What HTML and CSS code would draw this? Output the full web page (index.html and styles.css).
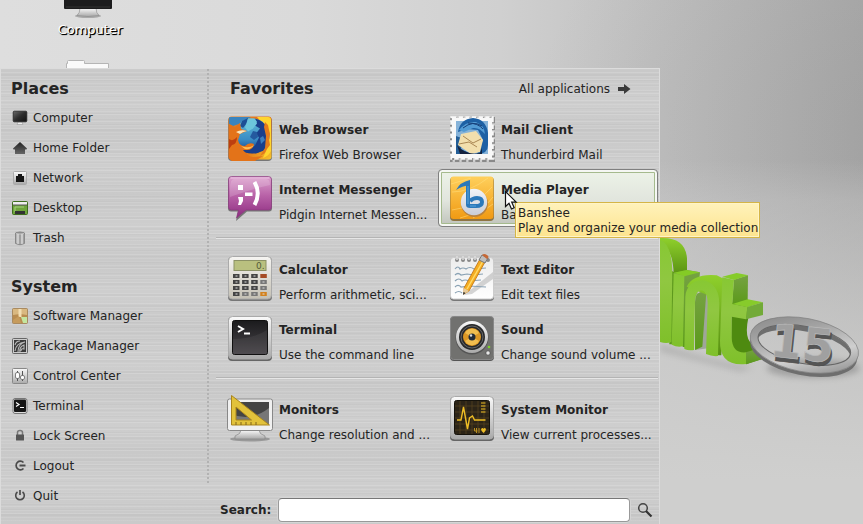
FILE: index.html
```html
<!DOCTYPE html>
<html lang="en">
<head>
<meta charset="utf-8">
<title>Desktop menu</title>
<link rel="stylesheet" href="styles.css">
</head>
<body>
<svg class="defs" aria-hidden="true">
  <defs>
    <linearGradient id="silver" x1="0" y1="0" x2="0" y2="1"><stop offset="0" stop-color="#fafafa"/><stop offset="1" stop-color="#a9a9a9"/></linearGradient>
    <linearGradient id="paper" x1="0" y1="0" x2="0" y2="1"><stop offset="0" stop-color="#ececec"/><stop offset="1" stop-color="#fff"/></linearGradient>
    <linearGradient id="pearl" x1="0" y1="0" x2="0" y2="1"><stop offset="0" stop-color="#f2f4f8"/><stop offset="1" stop-color="#c9cdd6"/></linearGradient>
    <linearGradient id="dark" x1="0" y1="0" x2="0" y2="1"><stop offset="0" stop-color="#1b1b1d"/><stop offset="1" stop-color="#49454a"/></linearGradient>
    <linearGradient id="screen" x1="0" y1="0" x2="1" y2="1"><stop offset="0" stop-color="#6a6a6a"/><stop offset=".5" stop-color="#2c2c2c"/><stop offset="1" stop-color="#111"/></linearGradient>
    <linearGradient id="coal" x1="0" y1="0" x2="0" y2="1"><stop offset="0" stop-color="#222"/><stop offset="1" stop-color="#666"/></linearGradient>
    <linearGradient id="pink" x1="0" y1="0" x2="0" y2="1"><stop offset="0" stop-color="#dca0cd"/><stop offset=".45" stop-color="#b963a8"/><stop offset="1" stop-color="#8d2b80"/></linearGradient>
    <linearGradient id="amber" x1="0" y1="0" x2="0" y2="1"><stop offset="0" stop-color="#ffd05c"/><stop offset="1" stop-color="#f09a13"/></linearGradient>
    <linearGradient id="beige" x1="0" y1="0" x2="0" y2="1"><stop offset="0" stop-color="#f6f5f2"/><stop offset="1" stop-color="#c4c0b4"/></linearGradient>
    <linearGradient id="globe" x1="0" y1="0" x2="0" y2="1"><stop offset="0" stop-color="#62bcd8"/><stop offset=".6" stop-color="#3a8cc4"/><stop offset="1" stop-color="#123a86"/></linearGradient>
    <linearGradient id="flame" x1="0" y1="0" x2="1" y2="1"><stop offset="0" stop-color="#e98527"/><stop offset=".6" stop-color="#e06c17"/><stop offset="1" stop-color="#f7c62c"/></linearGradient>
    <linearGradient id="mintTop" x1="0" y1="0" x2="0" y2="1"><stop offset="0" stop-color="#8fd02c"/><stop offset="1" stop-color="#578f12"/></linearGradient>
    <linearGradient id="mintFace" x1="0" y1="0" x2="0" y2="1"><stop offset="0" stop-color="#87c833"/><stop offset=".4" stop-color="#90c741"/><stop offset="1" stop-color="#7fc02a"/></linearGradient>
    <linearGradient id="mintSide" x1="0" y1="0" x2="0" y2="1"><stop offset="0" stop-color="#76a243"/><stop offset="1" stop-color="#5b9a1a"/></linearGradient>
    <linearGradient id="ring" x1="0" y1="0" x2="1" y2="1"><stop offset="0" stop-color="#888"/><stop offset=".3" stop-color="#a2a2a2"/><stop offset=".65" stop-color="#cfcfcf"/><stop offset="1" stop-color="#888"/></linearGradient>
    <filter id="soft" x="-20%" y="-60%" width="140%" height="220%"><feGaussianBlur stdDeviation="9"/></filter>
  </defs>
</svg>

<header class="desktop-icons">
  <a class="shortcut" href="#computer">
    <svg width="52" height="18" viewBox="0 0 52 18" aria-hidden="true">
      <ellipse cx="26" cy="16" rx="13" ry="2" fill="#aaa"/>
      <path d="M18 8h16q0 5 3 7.500-11 2-22 0 3-2.500 3-7.500z" fill="url(#silver)" stroke="#888" stroke-width=".6"/>
      <path d="M2 0h48v8q0 1-1 1H3q-1 0-1-1z" fill="#1c1c1d"/><path d="M4 7h44" stroke="#333"/>
    </svg>
    <span>Computer</span>
  </a>
  <svg class="folder" width="46" height="8" viewBox="0 0 46 8" aria-hidden="true"><path d="M1.500 9V3.500h1v-2q0-1 1-1h15q1 0 1 1v2h24V9z" fill="#fafafa" stroke="#b5b5b5"/></svg>
</header>

<main class="workspace">
  <section class="menu">
    <nav class="sidebar">
      <h2>Places</h2>
      <button class="item"><svg viewBox="0 0 16 16"><path d="M6 12h4l1 2.500H5z" fill="#eee" stroke="#999" stroke-width=".6"/><rect x="1.200" y="1.200" width="13.600" height="10.600" rx="1" fill="url(#screen)" stroke="#222" stroke-width=".8"/></svg>Computer</button>
      <button class="item"><svg viewBox="0 0 16 16"><path d="M8 2l7 6.500-.5 1H13v4.500H3V9.500H1.500l-.5-1z" fill="url(#coal)"/></svg>Home Folder</button>
      <button class="item"><svg viewBox="0 0 16 16"><rect x="1.500" y="1.500" width="13" height="13" rx="1" fill="url(#silver)" stroke="#aaa"/><path d="M4 12V6h2V4h4v2h2v6z" fill="#151515"/></svg>Network</button>
      <button class="item"><svg viewBox="0 0 16 16"><rect x=".5" y="1.500" width="15" height="13" rx="1" fill="#6fa63c" stroke="#3f6d1e"/><path d="M1 2h14v3H1z" fill="#eee"/><path d="M1 5h14" stroke="#555"/><path d="M3 12V7h9" stroke="#a7cf7c" fill="none"/><path d="M3 11h10v3H3z" fill="#333"/></svg>Desktop</button>
      <button class="item"><svg viewBox="0 0 16 16"><path d="M3.500 2.500h9v11q-4.500 2.500-9 0z" fill="#b5b5b5" stroke="#888"/><path d="M6 4v10M10 4v10" stroke="#e4e4e4"/><path d="M8 4v10M12 4v9" stroke="#8d8d8d"/><ellipse cx="8" cy="2.500" rx="4.500" ry="1.500" fill="#8c8c8c" stroke="#ddd" stroke-width=".7"/></svg>Trash</button>

      <h2>System</h2>
      <button class="item"><svg viewBox="0 0 16 16"><rect x=".5" y=".5" width="15" height="15" rx="1" fill="#b98c50" stroke="#a98a60"/><path d="M1 1h14v6l-7-1-7 1z" fill="#d9b880"/><path d="M6.500 1h3v8h-3z" fill="#f2dfb4"/><path d="M9 9h6v6h-4z" fill="#c4e6a0"/><path d="M1 12l6-4 2 7H1z" fill="#c69b5c"/></svg>Software Manager</button>
      <button class="item"><svg viewBox="0 0 16 16"><rect x=".5" y=".5" width="15" height="15" rx="1" fill="#ccc" stroke="#666"/><path d="M2 2h12v12H2z" fill="#3a3a3a"/><path d="M3 13q1-8 10-9-7 2-7 10m2 0q-1-5 4-7v4q-3-1-3 2M3 7q1-4 5-4" fill="none" stroke="#bbb" stroke-width="1.100"/></svg>Package Manager</button>
      <button class="item"><svg viewBox="0 0 16 16"><rect x=".5" y=".5" width="15" height="15" rx="1" fill="url(#silver)" stroke="#888"/><path d="M5.500 3v10M10.500 3v10" stroke="#555"/><rect x="3.500" y="4.500" width="4" height="6" rx="1.500" fill="#fff" stroke="#666" stroke-width=".8"/><rect x="8.500" y="7.500" width="4" height="4" rx="1.500" fill="#fff" stroke="#666" stroke-width=".8"/></svg>Control Center</button>
      <button class="item"><svg viewBox="0 0 16 16"><rect x="1" y=".5" width="14" height="15" rx="2" fill="#ddd" stroke="#777"/><rect x="2" y="1.500" width="12" height="12.500" rx="1" fill="#151515"/><path d="M4 4.500l3 2-3 2M8 9.500h4" fill="none" stroke="#fff" stroke-width="1.200"/></svg>Terminal</button>
      <button class="item"><svg viewBox="0 0 16 16"><path d="M5.500 7V4.500q0-2 2.500-2t2.500 2V7" fill="none" stroke="#777" stroke-width="1.500"/><rect x="4" y="6.500" width="8" height="6" rx=".5" fill="#555"/></svg>Lock Screen</button>
      <button class="item"><svg viewBox="0 0 16 16"><path d="M11.500 4.500A4.300 4.300 0 1 0 11.500 10.500" fill="none" stroke="#4b4b4b" stroke-width="1.700"/><path d="M7.500 7.500h6" stroke="#4b4b4b" stroke-width="2"/></svg>Logout</button>
      <button class="item"><svg viewBox="0 0 16 16"><path d="M5.500 4a4.300 4.300 0 1 0 5 0" fill="none" stroke="#4b4b4b" stroke-width="1.600"/><path d="M8 2v5" stroke="#4b4b4b" stroke-width="1.700"/></svg>Quit</button>
    </nav>

    <div class="content">
      <section class="favorites">
        <div class="heading">
          <h2>Favorites</h2>
          <button class="all">All applications <svg width="14" height="12" viewBox="0 0 14 12" aria-hidden="true"><path d="M1 4h6V1l6.500 5L7 11V8H1z" fill="#3b3b3b"/></svg></button>
        </div>

        <div class="group">
          <button class="app">
            <svg viewBox="0 0 48 48"><rect x="2" y="3" width="44" height="44" rx="4" fill="#777"/><rect x="2.500" y="2.500" width="43" height="43" rx="3" fill="url(#flame)"/>
              <path d="M31 3h11q3 0 3 3v31q-2 5-8 7 4-8 3-17 0-16-9-24z" fill="#ffd52e"/><path d="M3 4q0-1 2-1h20l-12 7-6 2-4-2z" fill="#3b84bd"/>
              <circle cx="26" cy="22" r="17.500" fill="url(#globe)"/>
              <path d="M28 4.500q7 1 11 6l4 9v9l-5 8-8 3-10-1-4-3q9 1 13-4l4-8-3-4 4-5-5-3 2-4z" fill="#1a3f8b"/>
              <path d="M16 7l6-3-1 5-4 5-3-2z" fill="#1d4f95"/><path d="M22 4.500h7l2 5-4 5-5 3-3-4z" fill="#6cc6dc"/><path d="M27 17l4 1 1 5-4 3-4-3z" fill="#24599f"/><path d="M34 24l3-2 2 4-4 4z" fill="#3d7fc0"/>
              <path d="M3 10l6 3 5-4 1 6 6 2-7 3-2 6q1 6 7 6 4-4 9-2-1 6-7 6h-4q4 6 10 7l10-1-8 5H6q-3-1-3-5z" fill="#e37319"/>
              <path d="M3 25q4 3 8-2 0 7-5 8l-3 4z" fill="#bd3f10"/><path d="M10 18q5-3 11-1-5 1-7 3z" fill="#f9e6bc"/><path d="M15 32q8 3 13-1-3 5-9 4z" fill="#ffbd53"/>
              <path d="M39 8l3 3 1 5 1 4-1 6 1 5-3 4-2 4-5 3 5-8 1-12-2-9z" fill="#e47b1c"/></svg>
            <span class="text"><strong>Web Browser</strong><span>Firefox Web Browser</span></span>
          </button>
          <button class="app">
            <svg viewBox="0 0 48 48"><rect x="4" y="5" width="41" height="41" fill="none" stroke="#8a8a8a" stroke-width="4" stroke-dasharray="4.500 2.300"/><rect x="4" y="4" width="40" height="40" fill="#f8f8f8" stroke="#f8f8f8" stroke-width="3.500" stroke-dasharray="4.300 2.360"/>
              <path d="M8 7h32v33H8z" fill="#86b3d9"/><path d="M8 22l8 3-3 10 10 5H8z" fill="#235e97"/><path d="M10 18q2-13 15-14 13 1 15 15v12q0 9-11 9l6-14-5-10-11-1z" fill="#1d60a4"/><path d="M11 16q7-9 17-8 8 3 9 12-6-7-12-6l-9 4z" fill="#529bd4"/><path d="M15 14q10-8 19-2M20 9q10 0 15 6" stroke="#153e78" fill="none"/>
              <path d="M13 20l15-3 7 9-3 12-9 2-13-9z" fill="#f2dfad"/><path d="M15 22l10 7 8-4M11 30l10-2 8 5" fill="none" stroke="#aa8754"/><path d="M9 31q9 11 23 8l2-5v6H12z" fill="#15233f"/></svg>
            <span class="text"><strong>Mail Client</strong><span>Thunderbird Mail</span></span>
          </button>
          <button class="app">
            <svg viewBox="0 0 48 48"><path d="M5 3.500h38q3 0 3 3v28q0 3-3 3H21L10 47l2-9.500H5q-3 0-3-3v-28q0-3 3-3z" fill="#777"/><path d="M5.500 2.500h37q3 0 3 3v27.500q0 3-3 3H20L10.500 44l2-8h-7q-3 0-3-3V5.500q0-3 3-3z" fill="url(#pink)" stroke="#893b7e" stroke-width=".7"/><path d="M4.500 4h39" stroke="#edc5e5"/><path d="M4 15q0-10 4-10h32q4 0 4 6-15 3-40 12z" fill="#fff" opacity=".17"/>
              <g fill="#fff"><rect x="12" y="11" width="5" height="5"/><path d="M12 23h5v4l-2 4h-3l1-4zM19 18.500h7.500V22H19z"/></g><path d="M28.500 8q6.500 11 0 23" fill="none" stroke="#fff" stroke-width="4"/></svg>
            <span class="text"><strong>Internet Messenger</strong><span>Pidgin Internet Messen...</span></span>
          </button>
          <div class="hovered">
            <button class="app active" aria-describedby="tip">
              <svg viewBox="0 0 48 48"><rect x="2" y="3" width="44" height="44" rx="4" fill="#8e7442"/><rect x="2.500" y="2.500" width="43" height="42.500" rx="3" fill="url(#amber)"/><path d="M4 18q18 0 36-14M4 36q22-2 40-23M12 44q22-5 33-21M3 10l20-6M25 44l20-14" fill="none" stroke="#ffe184" opacity=".5"/>
                <circle cx="26.500" cy="29.500" r="13.500" fill="#b9833f"/><circle cx="26" cy="28" r="13.200" fill="url(#pearl)"/><path d="M20 8v23q0 1 2 1h6q6 0 6-4t-5-4q-4 0-7 3" fill="none" stroke="#2c79ba" stroke-width="4"/><path d="M8 16q4-8 14-10v5Q14 12 8 16z" fill="#2c79ba"/><path d="M20 12v18M22 32h6" stroke="#59a4dc"/></svg>
              <span class="text"><strong>Media Player</strong><span>Banshee</span></span>
            </button>
            <svg class="cursor" width="14" height="21" viewBox="0 0 14 21" aria-hidden="true"><path d="M1.500 1.500v15l3.500-3.300 2.500 5.800 2.700-1.200-2.500-5.600h4.500z" fill="#fff" stroke="#111" stroke-width="1.200"/></svg>
            <div class="tooltip" id="tip" role="tooltip">Banshee<br>Play and organize your media collection</div>
          </div>
        </div>
        <hr>
        <div class="group">
          <button class="app">
            <svg viewBox="0 0 48 48"><rect x="2" y="3" width="44" height="44" rx="4" fill="#777"/><rect x="2.500" y="2.500" width="43" height="42.500" rx="4" fill="url(#beige)" stroke="#aaa"/><rect x="8" y="6.500" width="32" height="10" fill="#b9c07f" stroke="#8b9165"/><text class="digits" x="30" y="15">0.</text>
              <g stroke="#444" stroke-width="4" stroke-dasharray="6.500 2.600"><path d="M7 22h24.700M7 28h24.700M7 34h24.700M7 40h6.500"/></g><path d="M16.100 40h15.700" stroke="#777" stroke-width="4" stroke-dasharray="6.500 2.600"/><path d="M34.300 22h6.500" stroke="#a54b24" stroke-width="4"/><path d="M34.300 28h6.500M34.300 34h6.500" stroke="#777" stroke-width="4"/><path d="M34.300 40h6.500" stroke="#d3821d" stroke-width="4"/><path d="M9.500 22h2m7 0h2m7 0h2M9.500 28h2m7 0h2m7 0h2M9.500 34h2m7 0h2m7 0h2M9.500 40h2m7 0h2m7 0h2m7 0h2M36.500 28h2m-2 6h2" stroke="#ddd" stroke-width="1"/></svg>
            <span class="text"><strong>Calculator</strong><span>Perform arithmetic, sci...</span></span>
          </button>
          <button class="app">
            <svg viewBox="0 0 48 48"><rect x="2" y="4" width="44" height="43" rx="4" fill="#777"/><rect x="2.500" y="3.500" width="43" height="41.500" rx="3" fill="url(#paper)" stroke="#ccc"/><path d="M16 41l29-23v7L24 40z" fill="#999" opacity=".4"/>
              <g fill="#888"><circle cx="9" cy="6" r="2"/><circle cx="15" cy="6" r="2"/><circle cx="21" cy="6" r="2"/><circle cx="27" cy="6" r="2"/><circle cx="33" cy="6" r="2"/><circle cx="40" cy="6" r="2"/></g><path d="M9 2v4m6-4v4m6-4v4m6-4v4m6-4v4" stroke="#ddd" stroke-width="1.500"/>
              <path d="M7 15q3-4 5 0 3-2 6 0 4-3 8 0l12-1M7 21q3-3 6 0l6-1 7 1 9-1M7 27q4-4 7 0 3-2 7 0l12-1M7 33q3-3 6 0l8-1 17 1M7 39q4-3 7 0" fill="none" stroke="#8aa2b4" stroke-width="1.200"/><path d="M16 34L32 5l5 3-16 29-5 3z" fill="#f5ad22" stroke="#bd6e10" stroke-width=".8"/><path d="M19 35L35 7" stroke="#ffda6a" stroke-width="1.500"/><path d="M31 6l3-5 6 3-3 5z" fill="#bdbdbd" stroke="#777"/><path d="M34 1q2-2 5 0 3 2 0 4z" fill="#c56836"/><path d="M16 34l5 3-6 4z" fill="#e7cb9a"/><path d="M15.500 38l2 1-2.500 2z" fill="#222"/></svg>
            <span class="text"><strong>Text Editor</strong><span>Edit text files</span></span>
          </button>
          <button class="app">
            <svg viewBox="0 0 48 48"><rect x="2" y="3" width="44" height="44" rx="4" fill="#666"/><rect x="2.500" y="2.500" width="43" height="42.500" rx="4" fill="url(#silver)" stroke="#aaa"/><rect x="6.500" y="6.500" width="35" height="34" rx="2" fill="url(#dark)" stroke="#111"/><path d="M7 25q20 0 34-9v24H7z" fill="#777" opacity=".15"/><path d="M12 12l5 3-5 3" fill="none" stroke="#fff" stroke-width="2"/><path d="M18 19.500h6" stroke="#fff" stroke-width="2"/></svg>
            <span class="text"><strong>Terminal</strong><span>Use the command line</span></span>
          </button>
          <button class="app">
            <svg viewBox="0 0 48 48"><rect x="2" y="3" width="44" height="44" rx="4" fill="#555"/><rect x="2.500" y="2.500" width="43" height="43" rx="3" fill="#71716f" stroke="#888"/><circle cx="24" cy="24" r="16.500" fill="#555"/><circle cx="24" cy="23" r="16" fill="url(#silver)"/><circle cx="24" cy="23" r="13" fill="#28292b"/><circle cx="24" cy="23" r="11" fill="none" stroke="#777" stroke-width=".8"/><circle cx="24" cy="23" r="9" fill="#dc9725"/><path d="M17 19a8 8 0 0 1 14 0l-7 4zM17 27a8 8 0 0 0 14 0l-7-4z" fill="#f1bd4f"/><circle cx="24" cy="23" r="3.500" fill="#222b38"/><circle cx="23" cy="21.500" r="1.200" fill="#ddd"/><circle cx="41" cy="33" r="1.300" fill="#7dd32a"/><circle cx="40" cy="39" r="2.200" fill="#e8e8e8" stroke="#444" stroke-width=".7"/></svg>
            <span class="text"><strong>Sound</strong><span>Change sound volume ...</span></span>
          </button>
        </div>
        <hr>
        <div class="group">
          <button class="app">
            <svg viewBox="0 0 48 48"><ellipse cx="24" cy="45" rx="20" ry="2.500" fill="#999"/><path d="M15 36h18q0 4 6 6v3H9v-3q6-2 6-6z" fill="url(#silver)" stroke="#888" stroke-width=".7"/><rect x="1.500" y="5" width="45" height="31.500" rx="2" fill="#f0f0f0" stroke="#888"/><path d="M5 8h38v23H5z" fill="#444"/><path d="M5 20q20 8 38-6v17H5z" fill="#777"/><path d="M5.500 1.500v29.500h38zM10 13l15.500 13H10z" fill="#e2c23b" fill-rule="evenodd" stroke="#a9851d"/><path d="M10 28v3m5-3v3m5-3v3m5-3v3m5-3v3" stroke="#80641a"/></svg>
            <span class="text"><strong>Monitors</strong><span>Change resolution and ...</span></span>
          </button>
          <button class="app">
            <svg viewBox="0 0 48 48"><rect x="2" y="3" width="44" height="44" rx="4" fill="#666"/><rect x="2.500" y="2.500" width="43" height="42.500" rx="4" fill="url(#silver)" stroke="#aaa"/><rect x="6.500" y="6.500" width="35" height="34" rx="2" fill="#2c2417" stroke="#15120b"/><path d="M12 7v33m6-33v33m6-33v33m6-33v33m6-33v33M7 12h34M7 18h34M7 24h34M7 30h34M7 36h34" stroke="#59451f" stroke-width=".7"/><path d="M9 26h4l2.500-13 4 22 2-11 3-2 2 4h11" fill="none" stroke="#eebd25" stroke-width="1.400"/><path d="M33 9h4.500m-4.500 3h4.500m-4.500 3h4.500m-4.500 3h4.500" stroke="#eebd25" stroke-width="1.200"/><path d="M33 35q2-2 2.500 0 1-2 2.500 0 0 2-2.500 4-2.500-2-2.500-4z" fill="#eebd25"/><path d="M26.500 34v3h3m-1-3v5m2.500-5v5" fill="none" stroke="#b98f20"/></svg>
            <span class="text"><strong>System Monitor</strong><span>View current processes...</span></span>
          </button>
        </div>
      </section>

      <form class="search">
        <label for="q">Search:</label>
        <input id="q" type="text">
        <button type="button" aria-label="Search"><svg width="16" height="16" viewBox="0 0 16 16"><circle cx="6" cy="6" r="4.300" fill="none" stroke="#444" stroke-width="1.500"/><path d="M9 9l5.500 5.500" stroke="#333" stroke-width="2.200"/></svg></button>
      </form>
    </div>
  </section>

  <svg class="emblem" viewBox="60 138 609 459" role="img" aria-label="Mint 15">
    <ellipse cx="520" cy="535" rx="140" ry="28" fill="#666" opacity=".4" filter="url(#soft)"/>
    <path d="M60 462l140 42 140 30-40 10-240-60z" fill="#555" opacity=".2" filter="url(#soft)"/>
    <path d="M60 144Q136 140 141 205v45l-40 8q0-85-41-90z" fill="url(#mintTop)"/>
    <path d="M90 240l16 8-8 215-10 0z" fill="#5e991d"/>
    <path d="M60 150Q94 160 97 240l-3 216q-14 6-34 0z" fill="url(#mintFace)"/>
    <path d="M101 250l40-10 39 7-2 22-30 30-8 175-12-4z" fill="url(#mintSide)"/><path d="M101 248l39-8 40 7-47 12z" fill="#84cb25"/>
    <path d="M101 250l32 7-4 212q-18 4-34-5z" fill="url(#mintFace)"/>
    <path d="M166 310l38 0v165l-38 5z" fill="#9fa69a"/><path d="M165 335q0-35 34-30l-12 165-22 10z" fill="url(#mintSide)"/>
    <path d="M140 290q20-40 90-34l24 12-10 228-10 0-3-170z" fill="url(#mintTop)"/>
    <path d="M133 477l3-157c4-68 102-70 102 20l-4 158q-18 2-36-6l5-152c0-52-38-52-38 0l-3 140q-16 3-29-3z" fill="url(#mintFace)"/>
    <path d="M275 340l48-12 2 55q-18 85 35 85l8 38-50 17-45-50z" fill="#4e8a10"/>
    <path d="M282 269l42-13-1 76-47 10z" fill="url(#mintSide)"/><path d="M247 260l43-11 35 7-43 14z" fill="#86cc2a"/>
    <path d="M277 342l46-14 46 9-47 15z" fill="#87cb2b"/><path d="M322 351l47-14v38l-51 13z" fill="#72aa38"/><path d="M318 487l44-14 6 34-50 16z" fill="url(#mintSide)"/>
    <path d="M247 262l35 8-5 72 45 9-4 37-43-8v63q2 48 43 44v35q-80 8-78-70z" fill="url(#mintFace)"/>
    <g transform="rotate(11 493 465)" fill="none">
      <ellipse cx="494" cy="480" rx="153" ry="66" stroke="#6e6e6e" stroke-width="20"/>
      <ellipse cx="493" cy="465" rx="153" ry="68" stroke="url(#ring)" stroke-width="24"/>
      <ellipse cx="493" cy="465" rx="141" ry="56" stroke="#666" stroke-width="3"/>
      <ellipse cx="493" cy="465" rx="165" ry="80" stroke="#808080" stroke-width="2"/>
    </g>
    <g class="edition" transform="rotate(6 489 465)"><text x="491" y="521" fill="#555" stroke="#4c4c4c">15</text><text x="486" y="509" fill="#a0a0a0" stroke="#bbb">15</text></g>
  </svg>
</main>
</body>
</html>
```
FILE: styles.css
```css
* { box-sizing: border-box; }

body {
  margin: 0;
  min-height: 100vh;
  display: flex;
  flex-direction: column;
  overflow: hidden;
  font: 12px/15px "DejaVu Sans", sans-serif;
  color: #242424;
  background:
    linear-gradient(to bottom, transparent 160px, rgba(205, 205, 205, .35) 200px, rgba(206, 206, 205, .75) 340px, #cfcfce 480px),
    radial-gradient(ellipse 420px 300px at 110% 130px, rgba(120, 120, 120, .22), transparent),
    linear-gradient(to right, #dedede 0, #dadada 35%, #d0d0d0 58%, #bebebe 78%, #acacac 100%);
}

button {
  padding: 0;
  border: 0;
  background: none;
  font: inherit;
  color: inherit;
  text-align: left;
}

h2 {
  margin: 0;
  font-size: 16px;
  line-height: 20px;
}

.defs {
  position: absolute;
  width: 0;
  height: 0;
}

.desktop-icons {
  height: 68px;
  padding-left: 50px;
  display: flex;
  flex-direction: column;
  justify-content: space-between;
  align-items: flex-start;
}

.shortcut {
  width: 80px;
  display: flex;
  flex-direction: column;
  align-items: center;
  gap: 4px;
  font-size: 13px;
  color: #fff;
  text-decoration: none;
  text-shadow: 1px 1px 0 #000, 1px 1px 1px #000;
}

.shortcut svg { margin-right: 4px; }

.folder { margin-left: 15px; }

.workspace {
  flex: 1;
  display: grid;
  grid-template-columns: minmax(0, 1fr) 203px;
}

.emblem {
  width: 100%;
  margin-top: 168px;
}

.menu {
  display: grid;
  grid-template-columns: 206px minmax(0, 1fr);
  border: 1px solid #dcdcdc;
  border-bottom: 0;
  z-index: 1;
  background:
    repeating-linear-gradient(to bottom, rgba(255, 255, 255, .1) 0 1px, transparent 1px 3px, rgba(255, 255, 255, .14) 3px 4px, transparent 4px 7px),
    repeating-linear-gradient(to bottom, rgba(0, 0, 0, .02) 0 1px, transparent 1px 5px, rgba(0, 0, 0, .02) 5px 7px, transparent 7px 11px),
    repeating-linear-gradient(to bottom, transparent 0, rgba(255, 255, 255, .1) 32px, transparent 64px),
    #c9c9c9;
}

.sidebar {
  padding: 10px 0 13px 10px;
  display: flex;
  flex-direction: column;
}

.sidebar h2 { margin-bottom: 4px; }

.item + h2 { margin-top: 24px; }

.item {
  height: 30px;
  display: flex;
  align-items: center;
  gap: 5px;
}

.item svg {
  width: 16px;
  height: 16px;
  margin-left: 1px;
}

.favorites {
  padding: 10px 0 36px 7px;
  border-left: 2px dotted #b2b2b2;
}

.heading {
  display: flex;
  justify-content: space-between;
  align-items: center;
  padding: 0 28px 0 14px;
  margin-bottom: 10px;
}

.all {
  display: flex;
  align-items: center;
  gap: 7px;
}

.group {
  display: grid;
  grid-template-columns: repeat(2, minmax(0, 1fr));
  gap: 2px;
  padding-right: 1px;
}

.app {
  width: 100%;
  height: 58px;
  padding: 5px 0 0 10px;
  display: flex;
  align-items: flex-start;
  gap: 5px;
  white-space: nowrap;
}

.app > svg {
  width: 48px;
  height: 48px;
  flex: none;
}

.text {
  display: flex;
  flex-direction: column;
  gap: 10px;
  padding-top: 9px;
}

.digits {
  font: 9px "DejaVu Sans", sans-serif;
  fill: #555c38;
}

.hovered { position: relative; }

.active {
  border: 1px solid #808080;
  border-radius: 4px;
  padding: 4px 0 0 9px;
  background: linear-gradient(to bottom, #edf3e8, #e1e5dd 55%, #bfc3bb);
  box-shadow: inset 0 0 0 2px #f5f7f3, inset 0 0 0 3px #a5ba8d;
}

.cursor {
  position: absolute;
  left: 66px;
  top: 21px;
  z-index: 2;
}

.tooltip {
  position: absolute;
  left: 77px;
  top: 33px;
  padding: 3px 1px 1px 2px;
  border: 1px solid #d5b547;
  background: linear-gradient(to bottom, #fff2bb, #fde48e);
  box-shadow: inset 0 0 0 1px #fff4c7;
  white-space: nowrap;
}

hr {
  margin: 10px 1px 10px 0;
  border: 0;
  height: 2px;
  background: linear-gradient(to bottom, #b4b4b4 50%, #e6e6e6 50%);
}

.search {
  display: flex;
  align-items: center;
  gap: 7px;
  padding: 15px 6px 1px 13px;
}

.search label { font-weight: bold; }

.search input {
  flex: 1;
  min-width: 0;
  height: 24px;
  padding: 2px 6px;
  border: 1px solid #999;
  border-top-color: #777;
  border-radius: 4px;
  background: #fff;
  font: inherit;
  box-shadow: 0 0 0 1px #d5d5d5;
}

.search button,
.search svg { display: block; }

.edition {
  font: bold 138px "DejaVu Sans", sans-serif;
  text-anchor: middle;
  stroke-width: 2px;
}
```
